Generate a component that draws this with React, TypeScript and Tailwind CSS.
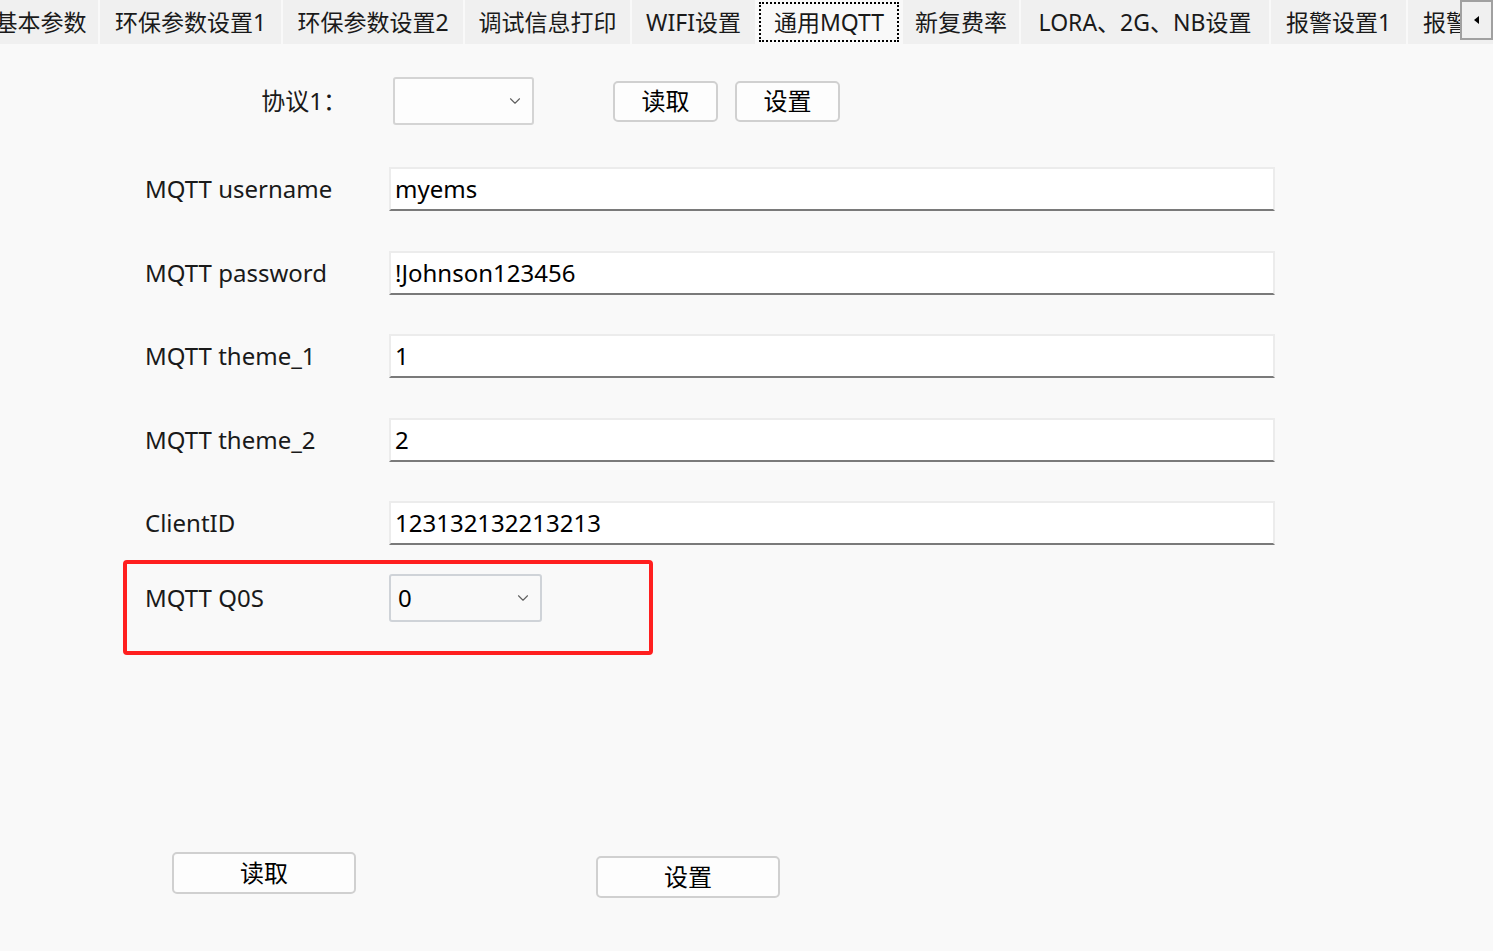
import { ChevronDown } from 'lucide-react'

const tabs = [
  { label: '基本参数', w: 'w-[117px]' },
  { label: '环保参数设置1', w: 'w-[183px]' },
  { label: '环保参数设置2', w: 'w-[182px]' },
  { label: '调试信息打印', w: 'w-[167px]' },
  { label: 'WIFI设置', w: 'w-[125px]' },
  { label: '通用MQTT', w: 'w-[146px]', active: true },
  { label: '新复费率', w: 'w-[118px]' },
  { label: 'LORA、2G、NB设置', w: 'w-[250px]' },
  { label: '报警设置1', w: 'w-[137px]' },
  { label: '报警设置2', w: 'w-[137px]' },
]

const fields = [
  { label: 'MQTT username', value: 'myems' },
  { label: 'MQTT password', value: '!Johnson123456' },
  { label: 'MQTT theme_1', value: '1' },
  { label: 'MQTT theme_2', value: '2' },
  { label: 'ClientID', value: '123132132213213' },
]

function Btn({ label, className }: { label: string; className: string }) {
  return (
    <button
      className={`flex items-center justify-center rounded-[5px] border-2 border-[#d0d0d0] bg-[#fdfdfd] text-[24px] text-black ${className}`}
    >
      {label}
    </button>
  )
}

export default function App() {
  return (
    <div
      className="w-[1493px] h-[951px] overflow-hidden bg-[#f9f9f9] text-[#1a1a1a]"
      style={{ fontFamily: '"Noto Sans", "Noto Sans CJK SC", sans-serif' }}
    >
      {/* Tab strip */}
      <div className="relative h-[45px] bg-[#f9f9f9] overflow-hidden">
        <div className="flex h-[44px] ml-[-17px]">
          {tabs.map((t) => (
            <div
              key={t.label}
              className={`${t.w} shrink-0 h-full flex items-center justify-center border-r-2 border-[#f9f9f9] text-[23px] leading-none whitespace-nowrap ${
                t.active ? 'bg-[#f9f9f9]' : 'bg-[#f0f0f0]'
              }`}
            >
              {t.active ? (
                <span className="h-[40px] w-[140px] flex items-center justify-center border-2 border-dotted border-black">
                  {t.label}
                </span>
              ) : (
                t.label
              )}
            </div>
          ))}
        </div>
        {/* scroll arrow */}
        <div className="absolute right-0 top-0 w-[33px] h-[40px] bg-[#f0f0f0] border-2 border-[#a0a0a0] flex items-center justify-center">
          <svg width="8" height="10" viewBox="0 0 8 10">
            <path d="M6 1 L1 5 L6 9 Z" fill="#000" />
          </svg>
        </div>
      </div>

      {/* Protocol row */}
      <div className="flex items-center mt-[32px] h-[48px]">
        <div className="w-[393px] pr-[46px] flex justify-end text-[24px]">协议1：</div>
        <div className="w-[141px] h-[48px] rounded-[3px] border-2 border-[#d4d4d4] bg-[#fdfdfd] flex items-center justify-end pr-[8px]">
          <ChevronDown className="w-[18px] h-[18px] text-[#606060]" strokeWidth={1.5} />
        </div>
        <Btn label="读取" className="ml-[79px] w-[105px] h-[41px]" />
        <Btn label="设置" className="ml-[17px] w-[105px] h-[41px]" />
      </div>

      {/* Text fields */}
      <div className="flex flex-col gap-[39.5px] mt-[42px] pl-[145px]">
        {fields.map((f) => (
          <div key={f.label} className="flex items-center h-[44px]">
            <div className="w-[244px] text-[24px]">{f.label}</div>
            <div className="w-[886px] h-[44px] bg-white border-2 border-[#ececec] border-b-[2px] border-b-[#7a7a7a] flex items-center pl-[4px] text-[24px] text-black">
              {f.value}
            </div>
          </div>
        ))}
      </div>

      {/* QoS */}
      <div className="ml-[123px] mt-[15px] w-[530px] h-[95px] rounded-[4px] border-[4px] border-[#ff1f1f] pl-[18px] pt-[10px]">
        <div className="flex items-center h-[48px]">
          <div className="w-[244px] text-[24px]">MQTT Q0S</div>
          <div className="w-[153px] h-[48px] rounded-[3px] border-2 border-[#cfd3d8] bg-[#f9f9f9] flex items-center justify-between pl-[7px] pr-[8px] text-[24px] text-black">
            0
            <ChevronDown className="w-[18px] h-[18px] text-[#606060]" strokeWidth={1.5} />
          </div>
        </div>
      </div>

      {/* Bottom buttons */}
      <div className="flex items-start mt-[197px] pl-[172px]">
        <Btn label="读取" className="w-[184px] h-[42px]" />
        <Btn label="设置" className="ml-[240px] mt-[4px] w-[184px] h-[42px]" />
      </div>
    </div>
  )
}
